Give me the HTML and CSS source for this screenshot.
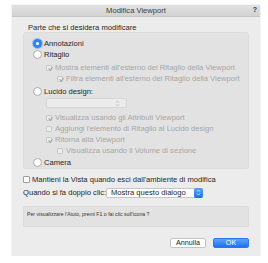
FILE: index.html
```html
<!DOCTYPE html>
<html>
<head>
<meta charset="utf-8">
<link rel="stylesheet" href="styles.css">
</head>
<body>
<div class="dialog">
  <div class="titlebar">
    <span class="title">Modifica Viewport</span>
    <span class="help-icon">?</span>
  </div>
  <div class="content">
    <div class="section-label">Parte che si desidera modificare</div>
    <div class="group">
      <div class="row lvl0"><span class="radio on"></span><span>Annotazioni</span></div>
      <div class="row lvl0"><span class="radio"></span><span>Ritaglio</span></div>
      <div class="row lvl1 dis g2"><span class="check checked"></span><span>Mostra elementi all'esterno del Ritaglio della Viewport</span></div>
      <div class="row lvl2 dis"><span class="check checked"></span><span>Filtra elementi all'esterno del Ritaglio della Viewport</span></div>
      <div class="row lvl0 g2"><span class="radio"></span><span>Lucido design:</span></div>
      <div class="popup-dis g1"><span class="chev">
        <svg width="5" height="7" viewBox="0 0 5 7"><path d="M1 2.6 L2.5 1 L4 2.6 M1 4.4 L2.5 6 L4 4.4" fill="none" stroke="#b5b5b5" stroke-width="0.8"/></svg>
      </span></div>
      <div class="row lvl1 dis g4"><span class="check checked"></span><span>Visualizza usando gli Attributi Viewport</span></div>
      <div class="row lvl1 dis"><span class="check"></span><span>Aggiungi l'elemento di Ritaglio al Lucido design</span></div>
      <div class="row lvl1 dis"><span class="check checked"></span><span>Ritorna alla Viewport</span></div>
      <div class="row lvl2 dis"><span class="check"></span><span>Visualizza usando il Volume di sezione</span></div>
      <div class="row lvl0 g1"><span class="radio"></span><span>Camera</span></div>
    </div>
    <div class="row keep"><span class="check enabled"></span><span>Mantieni la Vista quando esci dall'ambiente di modifica</span></div>
    <div class="row dbl">
      <span class="dbl-label">Quando si fa doppio clic:</span>
      <div class="popup">
        <span class="popup-text">Mostra questo dialogo</span>
        <span class="stepper">
          <svg width="5" height="7" viewBox="0 0 5 7"><path d="M1 2.6 L2.5 1 L4 2.6 M1 4.4 L2.5 6 L4 4.4" fill="none" stroke="#fff" stroke-width="0.8"/></svg>
        </span>
      </div>
    </div>
    <div class="helpbox">Per visualizzare l'Aiuto, premi F1 o fai clic sull'icona ?</div>
    <div class="buttons">
      <button class="btn">Annulla</button>
      <button class="btn primary">OK</button>
    </div>
  </div>
</div>
</body>
</html>
```

FILE: styles.css
```css
html, body {
  margin: 0;
  padding: 0;
  background: #ffffff;
}
body {
  font-family: "Liberation Sans", Arial, sans-serif;
  font-size: 7.6px;
  color: #262626;
}
.dialog {
  margin: 5px 0 0 12px;
  width: 248px;
  height: 251px;
  background: #ececec;
  box-shadow: 0 0 1px rgba(0,0,0,0.25);
  display: flex;
  flex-direction: column;
}
.titlebar {
  height: 12px;
  background: linear-gradient(#e1e1e1, #d2d2d2);
  border-bottom: 1px solid #c4c4c4;
  box-sizing: border-box;
  display: flex;
  align-items: center;
  justify-content: center;
  position: relative;
}
.title {
  font-size: 7.6px;
  color: #404040;
}
.help-icon {
  position: absolute;
  right: 3px;
  top: 1px;
  font-size: 7px;
  font-weight: bold;
  color: #333;
}
.content {
  padding: 0 11px;
  display: flex;
  flex-direction: column;
}
.section-label {
  margin-top: 6px;
  height: 9px;
  line-height: 9px;
  padding-left: 5px;
}
.group {
  height: 137px;
  box-sizing: border-box;
  background: #e2e2e2;
  border: 1px solid #dcdcdc;
  border-radius: 3px;
  padding-top: 5px;
  display: flex;
  flex-direction: column;
}
.row {
  height: 11px;
  display: flex;
  align-items: center;
  white-space: nowrap;
}
.g1 { margin-top: 1px; }
.g2 { margin-top: 2px; }
.g4 { margin-top: 4px; }
.lvl0 { padding-left: 9px; }
.lvl1 { padding-left: 22px; }
.lvl2 { padding-left: 33px; }
.dis { color: #a6a6a6; }
.radio {
  width: 9px;
  height: 9px;
  box-sizing: border-box;
  border-radius: 50%;
  background: #fff;
  border: 0.6px solid #a9a9a9;
  margin-right: 2px;
  flex: none;
  position: relative;
}
.radio.on {
  background: #2f86f6;
  border-color: #2a7ae8;
  box-shadow: 0 0 0 1px rgba(70,140,245,0.45);
}
.radio.on::after {
  content: "";
  position: absolute;
  width: 3px;
  height: 3px;
  border-radius: 50%;
  background: #fff;
  left: 2.4px;
  top: 2.4px;
}
.check {
  width: 6px;
  height: 6px;
  box-sizing: border-box;
  border: 0.6px solid #c8c8c8;
  background: #ececec;
  border-radius: 1px;
  margin-right: 3px;
  flex: none;
  position: relative;
}
.check.checked::after {
  content: "";
  position: absolute;
  left: 1.6px;
  top: 0px;
  width: 1.6px;
  height: 3.4px;
  border-right: 0.8px solid #a0a0a0;
  border-bottom: 0.8px solid #a0a0a0;
  transform: rotate(40deg);
}
.check.enabled {
  width: 7px;
  height: 7px;
  background: #fff;
  border-color: #9d9d9d;
  margin-right: 2px;
}
.popup-dis {
  margin-left: 22px;
  width: 81px;
  height: 10px;
  box-sizing: border-box;
  background: #ebebeb;
  border: 0.6px solid #d6d6d6;
  border-radius: 2px;
  display: flex;
  justify-content: flex-end;
  align-items: center;
  padding-right: 6px;
}
.chev { display: flex; }
.keep {
  margin-top: 5px;
}
.dbl {
  margin-top: 2px;
}
.dbl-label {
  width: 83px;
}
.popup {
  width: 97px;
  height: 10px;
  box-sizing: border-box;
  background: #fff;
  border: 0.6px solid #c6c6c6;
  border-radius: 2px;
  display: flex;
  align-items: center;
  justify-content: space-between;
  padding-left: 4px;
}
.stepper {
  width: 9px;
  height: 10px;
  margin-right: -1px;
  background: linear-gradient(#5aa2fb, #1a6ff0);
  border-radius: 2px;
  display: flex;
  align-items: center;
  justify-content: center;
}
.helpbox {
  margin-top: 8px;
  height: 21px;
  box-sizing: border-box;
  background: #e2e2e2;
  border: 1px solid #dbdbdb;
  border-radius: 2px;
  padding: 4px 0 0 3px;
  font-size: 5.2px;
  color: #333;
}
.buttons {
  margin-top: 11px;
  display: flex;
  justify-content: flex-end;
  gap: 7px;
}
.btn {
  width: 36px;
  height: 10px;
  padding: 0;
  font-family: "Liberation Sans", Arial, sans-serif;
  font-size: 7.2px;
  color: #222;
  background: #fff;
  border: 0.6px solid #c4c4c4;
  border-radius: 2px;
  line-height: 8px;
}
.btn.primary {
  background: linear-gradient(#5ea3fa, #1c71f1);
  border-color: #2a78ea;
  color: #fff;
}
```
